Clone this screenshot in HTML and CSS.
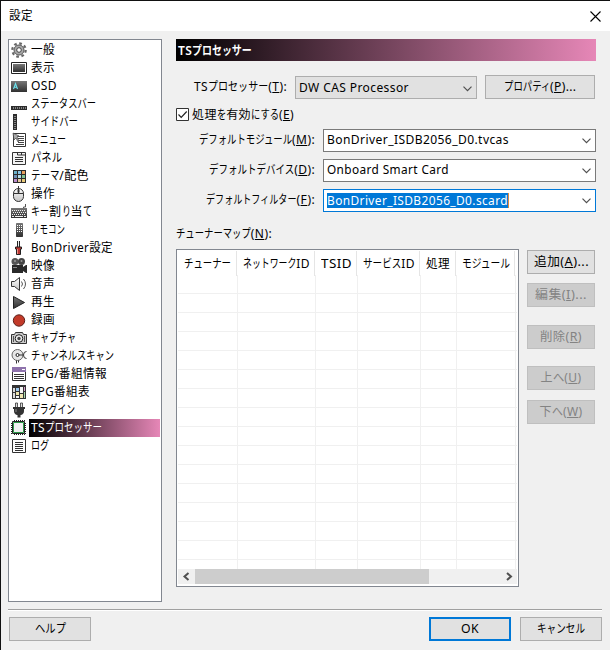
FILE: index.html
```html
<!DOCTYPE html>
<html lang="ja">
<head>
<meta charset="utf-8">
<title>設定</title>
<link rel="stylesheet" href="styles.css">
</head>
<body>
<svg class="defs" width="0" height="0">
  <defs>
    <linearGradient id="g" x1="0" y1="0" x2="0" y2="1"><stop offset="0" stop-color="#777"/><stop offset="1" stop-color="#303030"/></linearGradient>
    <linearGradient id="lg" x1="0" y1="0" x2="0" y2="1"><stop offset="0" stop-color="#fff"/><stop offset="1" stop-color="#c4c4c4"/></linearGradient>
  </defs>
</svg>
<div class="window">
  <header class="titlebar">
    <span class="t" data-w="24">設定</span>
    <svg class="close" width="11" height="11" viewBox="0 0 11 11"><path d="M.5.5l10 10M10.500 .5l-10 10" stroke="#000" stroke-width="1.1" fill="none"/></svg>
  </header>
  <main class="main">
    <ul class="nav">
      <li><svg viewBox="0 0 16 16"><circle cx="8" cy="8" r="6.700" fill="none" stroke="#666" stroke-width="2.200" stroke-dasharray="2.700 2.562"/><circle cx="8" cy="8" r="5" fill="#aaa" stroke="#555"/><circle cx="8" cy="8" r="2.300" fill="#fff" stroke="#444"/></svg><b><span class="t" data-w="24">一般</span></b></li>
      <li><svg viewBox="0 0 16 16"><path d="M.5 2.500h15v11H.5z" fill="#fff" stroke="#222"/><path d="M2 4h12v8H2z" fill="url(#g)"/></svg><b><span class="t" data-w="24">表示</span></b></li>
      <li><svg viewBox="0 0 16 16"><path d="M0 3h16v11H0z" fill="url(#g)"/><path d="M2.500 11l2-5.500 2 5.500M3.300 9.300h2.500" fill="none" stroke="#6ee4f0" stroke-width="1.100"/></svg><b><span class="t" data-w="26">OSD</span></b></li>
      <li><svg viewBox="0 0 16 16"><path d="M0 10h16v4H0z" fill="#2c2c2c"/><path d="M2 12h13" stroke="#ddd" stroke-dasharray="1 1"/></svg><b><span class="t" data-w="65">ステータスバー</span></b></li>
      <li><svg viewBox="0 0 16 16"><path d="M2 0h4v16H2z" fill="#2c2c2c"/><path d="M4 2v13" stroke="#ddd" stroke-dasharray="1 1"/></svg><b><span class="t" data-w="47">サイドバー</span></b></li>
      <li><svg viewBox="0 0 16 16"><path d="M2.500 1.500h12v13h-12z" fill="#fff" stroke="#333"/><path d="M6 4.500h7M7 6.500h6M7 8.500h6M7 10.500h6M5 12.500h8" stroke="#444"/><path d="M2 1l1 7 2-2 2 4 1-1-2-4 2-1z" fill="#aaa" stroke="#333" stroke-width=".6"/></svg><b><span class="t" data-w="35">メニュー</span></b></li>
      <li><svg viewBox="0 0 16 16"><path d="M1.500 2.500h13v12h-13z" fill="#f4f4f4" stroke="#333"/><path d="M6.500 2v3h8M10.500 2v3M4 7.500h8M4 9.500h8M4 11.500h8" fill="none" stroke="#333"/></svg><b><span class="t" data-w="31">パネル</span></b></li>
      <li><svg viewBox="0 0 16 16"><path d="M2 2h13v13H2z" fill="#2b2b2b"/><path d="M3 3h3v3H3z" fill="#6ab0c8"/><path d="M7 3h3v3H7z" fill="#8ac4e4"/><path d="M11 3h3v3h-3z" fill="#e8a05c"/><path d="M3 7h3v3H3z" fill="#6c90b8"/><path d="M7 7h3v3H7z" fill="#b3dce8"/><path d="M11 7h3v3h-3z" fill="#82c494"/><path d="M3 11h3v3H3z" fill="#ba8dcb"/><path d="M7 11h3v3H7z" fill="#e7caa0"/><path d="M11 11h3v3h-3z" fill="#e8ca78"/></svg><b><span class="t" data-w="58">テーマ/配色</span></b></li>
      <li><svg viewBox="0 0 16 16"><path d="M7.500 0v5" stroke="#333"/><rect x="2.500" y="2.500" width="10" height="13" rx="5" fill="url(#lg)" stroke="#333"/><path d="M2.500 7.500h10M7.500 2v5" stroke="#333"/><path d="M7 3.500h1v3H7z" fill="#333" stroke="#333"/></svg><b><span class="t" data-w="24">操作</span></b></li>
      <li><svg viewBox="0 0 16 16"><path d="M14.500 0v3h-2v2" fill="none" stroke="#555"/><path d="M0 4h16v10H0z" fill="url(#g)"/><path d="M1 6.500h14M2 8.500h13M1 10.500h14" stroke="#eee" stroke-dasharray="1 1"/><path d="M1 12.500h2M4 12.500h8M13 12.500h2" stroke="#eee"/></svg><b><span class="t" data-w="61">キー割り当て</span></b></li>
      <li><svg viewBox="0 0 16 16"><rect x="5" y="1" width="7" height="14" rx=".7" fill="url(#g)"/><path d="M6 3.500h5M6 5.500h5M6 7.500h5M6 9.500h5" stroke="#fff" stroke-dasharray="1 1"/></svg><b><span class="t" data-w="34">リモコン</span></b></li>
      <li><svg viewBox="0 0 16 16"><path d="M7.500 1v7" stroke="#222" stroke-width="3"/><path d="M7.500 1v6" stroke="#eee"/><path d="M4.500 7h6v2h-1v5.500h-4V9h-1z" fill="#b83430" stroke="#222"/><path d="M6.500 9v5" stroke="#ec8d82"/></svg><b><span class="t" data-w="82">BonDriver設定</span></b></li>
      <li><svg viewBox="0 0 16 16"><circle cx="4" cy="3.500" r="3.500" fill="#555"/><circle cx="10.500" cy="3.500" r="3.500" fill="#444"/><circle cx="4" cy="3" r="1" fill="#999"/><circle cx="10.500" cy="3" r="1" fill="#999"/><path d="M1 7h11v2l3-2h1v8h-1l-3-2v2H1z" fill="#292929"/><path d="M2 9.500h4" stroke="#888"/></svg><b><span class="t" data-w="24">映像</span></b></li>
      <li><svg viewBox="0 0 16 16"><path d="M.5 5.500h3L8.500 1.500v13l-5-4h-3z" fill="url(#lg)" stroke="#333"/><path d="M10.500 5.500q2 2.500 0 5M12.500 3q4 5 0 10" fill="none" stroke="#555"/></svg><b><span class="t" data-w="24">音声</span></b></li>
      <li><svg viewBox="0 0 16 16"><path d="M2.500 2.500L13.500 8.500l-11 6z" fill="url(#g)" stroke="#222"/></svg><b><span class="t" data-w="24">再生</span></b></li>
      <li><svg viewBox="0 0 16 16"><circle cx="8" cy="8.500" r="5.700" fill="#c23a29" stroke="#5d201a"/></svg><b><span class="t" data-w="24">録画</span></b></li>
      <li><svg viewBox="0 0 16 16"><path d="M.5 4.500h3l1-2h7l1 2h3v9H.5z" fill="#ccc" stroke="#333"/><circle cx="8" cy="8.500" r="3.800" fill="#eee" stroke="#222"/><circle cx="8" cy="8.500" r="1.700" fill="#444"/><path d="M2.500 6v6M13.500 6v6" stroke="#555"/></svg><b><span class="t" data-w="45">キャプチャ</span></b></li>
      <li><svg viewBox="0 0 16 16"><circle cx="6.500" cy="7" r="5.500" fill="#e6e6e6" stroke="#666"/><circle cx="6.500" cy="7" r="1.500" fill="#fff" stroke="#222"/><path d="M8 7h4M5.500 12.500v3M7.500 12.500v2" stroke="#333"/><path d="M15.500 3.500q-3 0-3 3.500t3 3.500" fill="none" stroke="#333"/></svg><b><span class="t" data-w="83">チャンネルスキャン</span></b></li>
      <li><svg viewBox="0 0 16 16"><path d="M1.500 1.500h13v13h-13z" fill="#fff" stroke="#333"/><path d="M1 1h14v5H1z" fill="#8e72ac"/><path d="M11 3.500h3" stroke="#fff"/><path d="M3 8.500h10M3 10.500h10M3 12.500h10" stroke="#333"/></svg><b><span class="t" data-w="76">EPG/番組情報</span></b></li>
      <li><svg viewBox="0 0 16 16"><path d="M1 1h14v14H1z" fill="#333"/><path d="M2 4h2v4H2zM2 9h2v5H2z" fill="#ddd"/><path d="M5 4h3v3H5z" fill="#9bc6ec"/><path d="M5 8h3v3H5zM9 10h3v4H9z" fill="#eee6b0"/><path d="M9 3h3v6H9zM5 12h3v2H5z" fill="#f4f4f4"/><path d="M13 3h1v4h-1z" fill="#dba1d0"/><path d="M13 8h1v6h-1z" fill="#a8d9ac"/></svg><b><span class="t" data-w="59">EPG番組表</span></b></li>
      <li><svg viewBox="0 0 16 16"><path d="M4.500 1h2v5h-2zM9.500 1h2v5h-2z" fill="#ddd" stroke="#333" stroke-width=".8"/><path d="M2 5h12v2h-1v2q0 3-3 4H9.500v2.500h-3V13H6Q3 12 3 9V7H2z" fill="#333"/><path d="M5 7v3" stroke="#888"/></svg><b><span class="t" data-w="44">プラグイン</span></b></li>
      <li class="selected"><svg viewBox="0 0 16 16"><path d="M3 .5h11M3 14.500h11" stroke="#222" stroke-dasharray="1 1"/><path d="M.5 3v11M14.500 3v11" stroke="#222" stroke-dasharray="1 1"/><path d="M1.500 1.500h12v12h-12z" fill="#eee" stroke="#222"/><path d="M2.500 2.500h10v10h-10z" fill="#f0f0f0" stroke="#2c9a48"/></svg><b><span class="t" data-w="71">TSプロセッサー</span></b></li>
      <li><svg viewBox="0 0 16 16"><path d="M1.500 1.500h13v13h-13z" fill="#fff" stroke="#333"/><path d="M4 4.500h8M4 6.500h8M4 8.500h8M4 10.500h8M4 12.500h8" stroke="#333"/></svg><b><span class="t" data-w="18">ログ</span></b></li>
    </ul>
    <section class="page">
      <h1><span class="t" data-w="74">TSプロセッサー</span></h1>
      <div class="row processor">
        <label><span class="t" data-w="93">TSプロセッサー(<u>T</u>):</span></label>
        <div class="combo list"><span class="t" data-w="110">DW CAS Processor</span><svg class="chev" viewBox="0 0 9 6"><path d="M.5.7l4 4 4-4"/></svg></div>
        <button><span class="t" data-w="73">プロパティ(<u>P</u>)...</span></button>
      </div>
      <div class="check"><svg width="13" height="13" viewBox="0 0 13 13"><path d="M.5.5h12v12H.5z" fill="#fff" stroke="#333"/><path d="M2.500 6.500l2.700 2.800L10.700 3.500" fill="none" stroke="#222" stroke-width="1.200"/></svg><span class="t" data-w="102">処理を有効にする(<u>E</u>)</span></div>
      <div class="row"><label><span class="t" data-w="116">デフォルトモジュール(<u>M</u>):</span></label><div class="combo"><span class="t" data-w="182">BonDriver_ISDB2056_D0.tvcas</span><svg class="chev" viewBox="0 0 9 6"><path d="M.5.7l4 4 4-4"/></svg></div></div>
      <div class="row"><label><span class="t" data-w="106">デフォルトデバイス(<u>D</u>):</span></label><div class="combo"><span class="t" data-w="122">Onboard Smart Card</span><svg class="chev" viewBox="0 0 9 6"><path d="M.5.7l4 4 4-4"/></svg></div></div>
      <div class="row"><label><span class="t" data-w="109">デフォルトフィルター(<u>F</u>):</span></label><div class="combo focus"><i><span class="t" data-w="181">BonDriver_ISDB2056_D0.scard</span></i><svg class="chev" viewBox="0 0 9 6"><path d="M.5.7l4 4 4-4"/></svg></div></div>
      <div class="caption"><span class="t" data-w="96">チューナーマップ(<u>N</u>):</span></div>
      <div class="map">
        <div class="table">
          <div class="thead"><div><span class="t" data-w="47">チューナー</span></div><div><span class="t" data-w="67">ネットワークID</span></div><div><span class="t" data-w="31">TSID</span></div><div><span class="t" data-w="52">サービスID</span></div><div><span class="t" data-w="24">処理</span></div><div><span class="t" data-w="48">モジュール</span></div></div>
          <div class="tbody"><div></div><div></div><div></div><div></div><div></div><div></div></div>
          <div class="scroll"><svg viewBox="0 0 17 15"><path d="M10.500 4l-4 3.500 4 3.500"/></svg><div class="thumb"></div><svg viewBox="0 0 17 15"><path d="M7 4l4 3.500L7 11"/></svg></div>
        </div>
        <div class="actions">
          <button><span class="t" data-w="55">追加(<u>A</u>)...</span></button>
          <button disabled><span class="t" data-w="52">編集(<u>I</u>)...</span></button>
          <button disabled><span class="t" data-w="42">削除(<u>R</u>)</span></button>
          <button disabled><span class="t" data-w="41">上へ(<u>U</u>)</span></button>
          <button disabled><span class="t" data-w="43">下へ(<u>W</u>)</span></button>
        </div>
      </div>
    </section>
  </main>
  <footer class="footer">
    <button><span class="t" data-w="31">ヘルプ</span></button>
    <button class="default"><span class="t" data-w="18">OK</span></button>
    <button><span class="t" data-w="48">キャンセル</span></button>
  </footer>
</div>
<script src="kana.js"></script>
</body>
</html>
```
FILE: styles.css
```css
* { box-sizing: border-box; }
body { margin: 0; font: 12px/18px "Noto Sans", "Noto Sans CJK JP", sans-serif; color: #000; }
.defs { display: block; }
.window { width: 610px; height: 650px; background: #f0f0f0; border: solid #111; border-width: 1px 0 0 1px; overflow: hidden; }
.titlebar { height: 30px; background: #fff; display: flex; justify-content: space-between; align-items: center; padding: 0 9px 0 8px; }
.close { display: block; }
.t { display: inline-block; white-space: nowrap; transform-origin: 0 50%; text-align: left; letter-spacing: .4px; }
.kana { display: inline-block; transform-origin: 0 50%; letter-spacing: 0; }
u { text-underline-offset: 1px; text-decoration-thickness: 1px; text-decoration-skip-ink: none; }
.main { display: flex; gap: 14px; padding: 8px 0 0 7px; height: 578px; }
.nav { list-style: none; margin: 0; padding: 1px; width: 154px; height: 563px; border: 1px solid #828790; background: #fff; }
.nav li { display: flex; height: 18px; align-items: center; gap: 2px; padding-left: 1px; }
.nav svg { width: 16px; height: 16px; flex: none; }
.nav b { flex: 1; font-weight: 400; height: 18px; padding-left: 2px; line-height: 18px; }
.selected b { background: linear-gradient(90deg, #000, #e687b7); color: #fff; }
.page { width: 420px; }
h1 { margin: 0 0 14px; height: 22px; padding-left: 2px; background: linear-gradient(90deg, #000, #e687b7); color: #fff; font-size: 12px; line-height: 23px; font-weight: 600; }
.row { display: flex; align-items: center; height: 23px; margin-bottom: 7px; }
.row label { width: 139px; text-align: right; margin-right: 8px; line-height: 22px; height: 23px; }
.processor { height: 24px; margin-bottom: 9px; }
.processor label { width: 111px; }
.combo { width: 273px; height: 23px; border: 1px solid #7a7a7a; background: #fff; display: flex; justify-content: space-between; align-items: center; padding: 0 4px 1px 3px; }
.combo.list { width: 182px; background: #e1e1e1; border-color: #adadad; margin: 1px 8px 0 0; padding-bottom: 0; }
.combo.focus { border-color: #0078d7; }
.combo i { font-style: normal; background: #0078d7; color: #fff; height: 15px; line-height: 15px; border-right: 1px solid #e08a3c; }
.chev { width: 9px; height: 6px; margin-top: 2px; }
.chev path, .scroll path { fill: none; stroke: #505050; stroke-width: 1.2; }
.check { display: flex; align-items: center; gap: 3px; height: 13px; margin-bottom: 8px; }
.caption { height: 18px; margin: 13px 0 6px; }
button { display: flex; align-items: center; justify-content: center; width: 82px; height: 24px; padding: 0; border: 1px solid #adadad; background: #e1e1e1; color: #000; font: inherit; }
.processor button { width: 110px; }
button:disabled { background: #ccc; border-color: #bfbfbf; color: #838383; }
.map { display: flex; gap: 8px; }
.table { width: 343px; height: 338px; border: 1px solid #828790; background: #fff; padding: 1px; }
.thead, .tbody { display: grid; grid-template-columns: 59px 78px 42px 63px 36px 59px; }
.thead { height: 24px; }
.thead div { border-right: 1px solid #e5e5e5; padding-left: 6px; line-height: 25px; }
.tbody { height: 294px; grid-template-columns: 60px 78px 42px 63px 36px 59px; background: repeating-linear-gradient(#fff 0 18px, #f0f0f0 18px 19px); }
.tbody div { border-right: 1px solid #f0f0f0; }
.scroll { height: 15px; display: flex; background: #f0f0f0; }
.scroll svg { width: 17px; height: 15px; }
.scroll path { stroke-width: 2; }
.thumb { width: 234px; background: #cdcdcd; margin-right: 71px; }
.actions button { width: 68px; }
.actions { padding-top: 1px; }
.actions button:nth-child(2) { margin: 9px 0 18px; }
.actions button:nth-child(4) { margin: 17px 0 10px; }
.footer { display: flex; gap: 9px; margin: 0 8px 0 7px; padding: 6px 0 0 1px; width: 594px; border-top: 1px solid #a0a0a0; box-shadow: inset 0 1px #fff; }
.footer button { flex: none; margin-top: 1px; }
.footer button:first-child { margin-right: 329px; }
.footer .default { border: 2px solid #0078d7; }
```
FILE: kana.js
```js
// Narrow the kana in each label so that the label has its design width.
document.querySelectorAll('.t').forEach(function (el) {
  var target = Number(el.dataset.w);
  var walker = document.createTreeWalker(el, NodeFilter.SHOW_TEXT);
  var nodes = [];
  while (walker.nextNode()) nodes.push(walker.currentNode);
  nodes.forEach(function (node) {
    var parts = node.data.split(/([\u3040-\u30ff]+)/).filter(Boolean);
    var out = document.createDocumentFragment();
    parts.forEach(function (part) {
      if (/[\u3040-\u30ff]/.test(part)) {
        var span = document.createElement('span');
        span.className = 'kana';
        span.textContent = part;
        out.appendChild(span);
      } else {
        out.appendChild(document.createTextNode(part));
      }
    });
    node.parentNode.replaceChild(out, node);
  });
  var width = el.getBoundingClientRect().width;
  var runs = Array.from(el.querySelectorAll('.kana'));
  if (runs.length) {
    var widths = runs.map(function (r) { return r.getBoundingClientRect().width; });
    var sum = widths.reduce(function (a, b) { return a + b; }, 0);
    var scale = (target - width + sum) / sum;
    runs.forEach(function (r, i) {
      r.style.transform = 'scaleX(' + scale + ')';
      r.style.marginRight = widths[i] * (scale - 1) + 'px';
    });
  } else {
    el.style.transform = 'scaleX(' + target / width + ')';
    el.style.marginRight = target - width + 'px';
  }
});
```
